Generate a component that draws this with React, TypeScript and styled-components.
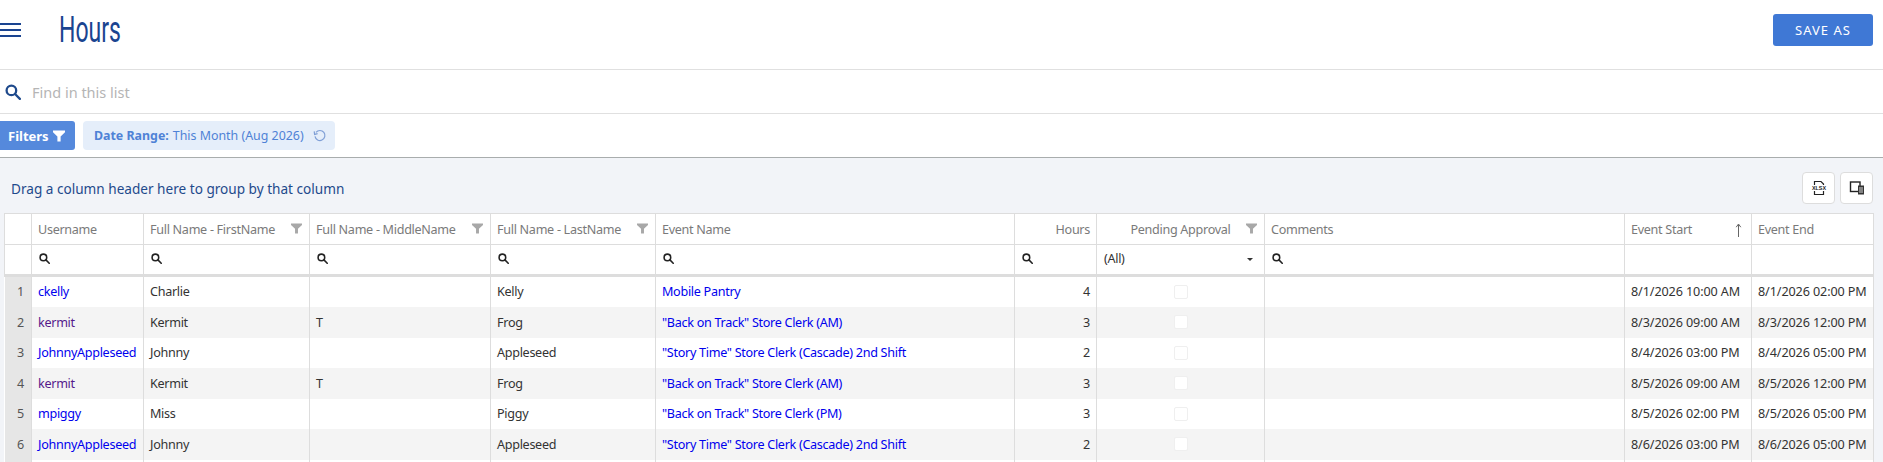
import React from "react";
import styled, { createGlobalStyle } from "styled-components";

interface HoursRow {
  id: number;
  username: string;
  visited?: boolean;
  first: string;
  middle?: string;
  last: string;
  event: string;
  hours: number;
  start: string;
  end: string;
}

const ROWS: HoursRow[] = [
  { id: 1, username: "ckelly", first: "Charlie", last: "Kelly", event: "Mobile Pantry", hours: 4, start: "8/1/2026 10:00 AM", end: "8/1/2026 02:00 PM" },
  { id: 2, username: "kermit", visited: true, first: "Kermit", middle: "T", last: "Frog", event: '"Back on Track" Store Clerk (AM)', hours: 3, start: "8/3/2026 09:00 AM", end: "8/3/2026 12:00 PM" },
  { id: 3, username: "JohnnyAppleseed", first: "Johnny", last: "Appleseed", event: '"Story Time" Store Clerk (Cascade) 2nd Shift', hours: 2, start: "8/4/2026 03:00 PM", end: "8/4/2026 05:00 PM" },
  { id: 4, username: "kermit", visited: true, first: "Kermit", middle: "T", last: "Frog", event: '"Back on Track" Store Clerk (AM)', hours: 3, start: "8/5/2026 09:00 AM", end: "8/5/2026 12:00 PM" },
  { id: 5, username: "mpiggy", first: "Miss", last: "Piggy", event: '"Back on Track" Store Clerk (PM)', hours: 3, start: "8/5/2026 02:00 PM", end: "8/5/2026 05:00 PM" },
  { id: 6, username: "JohnnyAppleseed", first: "Johnny", last: "Appleseed", event: '"Story Time" Store Clerk (Cascade) 2nd Shift', hours: 2, start: "8/6/2026 03:00 PM", end: "8/6/2026 05:00 PM" },
];

const COLUMN_WIDTHS = [27, 112, 166, 181, 165, 359, 82, 168, 360, 127, 122];
const ROW_HEIGHTS = [31, 31, 30, 31, 30, 31, 30];

const GlobalStyle = createGlobalStyle`
  html, body {
    margin: 0;
    height: 462px;
    overflow: hidden;
    background: #fff;
    font-family: "Noto Sans", "Open Sans", sans-serif;
    font-size: 13px;
  }
`;

const Page = styled.div`
  display: flex;
  flex-direction: column;
  height: 462px;
`;

const TopBar = styled.header`
  display: flex;
  align-items: center;
  justify-content: space-between;
  height: 70px;
  box-sizing: border-box;
  padding: 0 10px 9px 0;
  border-bottom: 1px solid #e0e0e0;
`;

const TitleGroup = styled.div`
  display: flex;
  align-items: center;
  gap: 38px;
`;

const Hamburger = styled.div`
  width: 21px;
  height: 14px;
  border-top: 2px solid #1a4490;
  border-bottom: 2px solid #1a4490;
  box-sizing: border-box;
  display: flex;
  align-items: center;

  &::before {
    content: "";
    display: block;
    width: 100%;
    height: 2px;
    background: #1a4490;
  }
`;

const Title = styled.h1`
  margin: 0;
  font-family: "Roboto", sans-serif;
  font-weight: 400;
  font-size: 36px;
  line-height: 44px;
  color: #1a4490;
  transform: scaleX(0.64);
  transform-origin: left center;
`;

const SaveButton = styled.button`
  width: 100px;
  height: 32px;
  border: none;
  border-radius: 3px;
  background: #3f78d5;
  color: #fff;
  font-family: inherit;
  font-size: 13px;
  letter-spacing: 1px;
`;

const SearchRow = styled.div`
  display: flex;
  align-items: center;
  gap: 11px;
  height: 44px;
  box-sizing: border-box;
  padding: 0 0 0 5px;
  border-bottom: 1px solid #e0e0e0;
  color: #b5b5b5;
  font-size: 14.5px;
`;

const FilterRow = styled.div`
  display: flex;
  align-items: flex-start;
  gap: 8px;
  height: 44px;
  box-sizing: border-box;
  padding-top: 7px;
  border-bottom: 1px solid #a9adad;
`;

const FiltersButton = styled.button`
  display: flex;
  align-items: center;
  gap: 4px;
  width: 75px;
  height: 29px;
  padding: 0 0 0 8px;
  border: none;
  border-radius: 0 3px 3px 0;
  background: #5589dc;
  color: #fff;
  font-family: inherit;
  font-size: 13px;
  font-weight: 700;
`;

const Chip = styled.div`
  display: flex;
  align-items: center;
  width: 252px;
  height: 29px;
  box-sizing: border-box;
  padding-left: 11px;
  border-radius: 4px;
  background: #e5eefa;
  color: #4f82d6;
  font-size: 12.4px;
  white-space: nowrap;

  b {
    margin-right: 4px;
  }

  svg {
    margin-left: 9px;
  }
`;

const GridPanel = styled.section`
  flex: 1;
  min-height: 0;
  overflow: hidden;
  background: #f2f4f8;
  padding-left: 4px;
`;

const GroupBar = styled.div`
  display: flex;
  align-items: center;
  justify-content: space-between;
  height: 55px;
  box-sizing: border-box;
  padding: 14px 10px 9px 7px;
  color: #1f4a8c;
  font-size: 13.6px;
`;

const Tools = styled.div`
  display: flex;
  gap: 5px;
`;

const ToolButton = styled.button`
  display: flex;
  align-items: center;
  justify-content: center;
  width: 33px;
  height: 32px;
  padding: 0;
  border: 1px solid #ddd;
  border-radius: 4px;
  background: #fff;
`;

const Table = styled.table`
  width: 1869px;
  table-layout: fixed;
  border-collapse: collapse;
  background: #fff;
  color: #333;
  font-size: 12.6px;
  letter-spacing: -0.3px;
`;

const HeadCell = styled.th<{ $align?: string }>`
  height: 31px;
  box-sizing: border-box;
  padding: 0 6px;
  border: 1px solid #ddd;
  color: #7a7a7a;
  font-weight: 400;
  text-align: ${(p) => p.$align ?? "left"};
  white-space: nowrap;
  overflow: hidden;
  position: relative;
`;

const HeadIcon = styled.span<{ $right?: number }>`
  position: absolute;
  right: ${(p) => p.$right ?? 7}px;
  top: 9px;
  display: flex;
`;

const SearchCell = styled.td`
  height: 31px;
  box-sizing: border-box;
  padding: 0 7px;
  border: 1px solid #ddd;
  border-bottom: 3px solid #ddd;
  line-height: 1;
`;

const SelectValue = styled.div`
  display: flex;
  align-items: center;
  justify-content: space-between;
  padding-right: 4px;
  color: #333;

  &::after {
    content: "";
    border-left: 3px solid transparent;
    border-right: 3px solid transparent;
    border-top: 3px solid #333;
  }
`;

const Row = styled.tr<{ $alt: boolean }>`
  background: ${(p) => (p.$alt ? "#f4f4f4" : "#fff")};
`;

const Cell = styled.td<{ $align?: string }>`
  padding: 0 6px;
  border-left: 1px solid #ddd;
  border-right: 1px solid #ddd;
  text-align: ${(p) => p.$align ?? "left"};
  white-space: nowrap;
  overflow: hidden;
`;

const DateCell = styled(Cell)`
  letter-spacing: -0.1px;
`;

const IndexCell = styled.td`
  padding: 0 7px 0 0;
  background: #e6e6e6;
  border-right: 1px solid #ddd;
  color: #555;
  text-align: right;
`;

const UserLink = styled.a<{ $visited?: boolean }>`
  color: ${(p) => (p.$visited ? "#551a8b" : "#0000ee")};
  text-decoration: none;
`;

const Check = styled.span`
  display: block;
  width: 14px;
  height: 14px;
  margin: 0 auto;
  box-sizing: border-box;
  border: 1px solid #efefef;
  border-radius: 2px;
  background: #fff;
`;

const Magnifier = ({ size = 11, color = "#222", stroke = 2 }: { size?: number; color?: string; stroke?: number }) => (
  <svg width={size} height={size} viewBox="0 0 14 14" fill="none" stroke={color} strokeWidth={stroke}>
    <circle cx="5.6" cy="5.6" r="4.2" />
    <path d="M8.8 8.8 L13 13" strokeLinecap="round" />
  </svg>
);

const Funnel = ({ color = "#a8a8a8", size = 11 }: { color?: string; size?: number }) => (
  <svg width={size} height={size} viewBox="0 0 12 12" fill={color}>
    <path d="M0 0.5 H12 V2.2 L7.6 6.4 V11.5 H4.4 V6.4 L0 2.2 Z" />
  </svg>
);

const Reset = () => (
  <svg width="14" height="14" viewBox="0 0 14 14" fill="none" stroke="#7f9fd6" strokeWidth="1.2">
    <path d="M3 3.4 A5 5 0 1 1 2 7.4" />
    <path d="M1.2 2.4 L1.6 5.4 L4.6 4.6" />
  </svg>
);

const SortUp = () => (
  <svg width="7" height="15" viewBox="0 0 7 15" fill="none" stroke="#666" strokeWidth="1">
    <path d="M3.5 14 V1.5 M1.2 4.2 L3.5 1 L5.8 4.2" />
  </svg>
);

const XlsxIcon = () => (
  <svg width="16" height="16" viewBox="0 0 16 16" fill="none">
    <path d="M3.5 5 V1.5 H10 L12.5 4 V5 M3.5 11 V14.5 H12.5 V11" stroke="#222" strokeWidth="1.2" />
    <text x="8" y="10.4" fontSize="5.4" fontFamily="Liberation Sans" fontWeight="700" textAnchor="middle" fill="#222">XLSX</text>
  </svg>
);

const ColumnsIcon = () => (
  <svg width="16" height="16" viewBox="0 0 16 16" fill="none">
    <rect x="1.5" y="2" width="9.5" height="9.5" stroke="#222" strokeWidth="1.4" />
    <rect x="9" y="5.5" width="6" height="9" fill="#333" />
    <path d="M10 8 H14 M10 10 H14 M10 12 H14" stroke="#fff" strokeWidth="0.8" />
  </svg>
);

const App = () => (
  <Page>
    <GlobalStyle />
    <TopBar>
      <TitleGroup>
        <Hamburger />
        <Title>Hours</Title>
      </TitleGroup>
      <SaveButton>SAVE AS</SaveButton>
    </TopBar>
    <SearchRow>
      <Magnifier size={16} color="#1f4a8c" />
      Find in this list
    </SearchRow>
    <FilterRow>
      <FiltersButton>
        Filters <Funnel color="#fff" size={12} />
      </FiltersButton>
      <Chip>
        <b>Date Range:</b> This Month (Aug 2026)
        <Reset />
      </Chip>
    </FilterRow>
    <GridPanel>
      <GroupBar>
        Drag a column header here to group by that column
        <Tools>
          <ToolButton>
            <XlsxIcon />
          </ToolButton>
          <ToolButton>
            <ColumnsIcon />
          </ToolButton>
        </Tools>
      </GroupBar>
      <Table>
        <colgroup>
          {COLUMN_WIDTHS.map((w, i) => (
            <col key={i} style={{ width: w }} />
          ))}
        </colgroup>
        <thead>
          <tr>
            <HeadCell />
            <HeadCell>Username</HeadCell>
            <HeadCell>
              Full Name - FirstName
              <HeadIcon>
                <Funnel />
              </HeadIcon>
            </HeadCell>
            <HeadCell>
              Full Name - MiddleName
              <HeadIcon>
                <Funnel />
              </HeadIcon>
            </HeadCell>
            <HeadCell>
              Full Name - LastName
              <HeadIcon>
                <Funnel />
              </HeadIcon>
            </HeadCell>
            <HeadCell>Event Name</HeadCell>
            <HeadCell $align="right">Hours</HeadCell>
            <HeadCell $align="center">
              Pending Approval
              <HeadIcon>
                <Funnel />
              </HeadIcon>
            </HeadCell>
            <HeadCell>Comments</HeadCell>
            <HeadCell>
              Event Start
              <HeadIcon $right={9}>
                <SortUp />
              </HeadIcon>
            </HeadCell>
            <HeadCell>Event End</HeadCell>
          </tr>
          <tr>
            <SearchCell />
            <SearchCell><Magnifier /></SearchCell>
            <SearchCell><Magnifier /></SearchCell>
            <SearchCell><Magnifier /></SearchCell>
            <SearchCell><Magnifier /></SearchCell>
            <SearchCell><Magnifier /></SearchCell>
            <SearchCell><Magnifier /></SearchCell>
            <SearchCell><SelectValue>(All)</SelectValue></SearchCell>
            <SearchCell><Magnifier /></SearchCell>
            <SearchCell />
            <SearchCell />
          </tr>
        </thead>
        <tbody>
          {ROWS.map((r, i) => (
            <Row key={r.id} $alt={i % 2 === 1} style={{ height: ROW_HEIGHTS[i] }}>
              <IndexCell>{r.id}</IndexCell>
              <Cell>
                <UserLink href="#" $visited={r.visited}>{r.username}</UserLink>
              </Cell>
              <Cell>{r.first}</Cell>
              <Cell>{r.middle}</Cell>
              <Cell>{r.last}</Cell>
              <Cell>
                <UserLink href="#">{r.event}</UserLink>
              </Cell>
              <Cell $align="right">{r.hours}</Cell>
              <Cell><Check /></Cell>
              <Cell />
              <DateCell>{r.start}</DateCell>
              <DateCell>{r.end}</DateCell>
            </Row>
          ))}
          <Row $alt={false} style={{ height: 30 }}>
            <IndexCell />
            {COLUMN_WIDTHS.slice(1).map((w) => (
              <Cell key={w} />
            ))}
          </Row>
        </tbody>
      </Table>
    </GridPanel>
  </Page>
);

export default App;
